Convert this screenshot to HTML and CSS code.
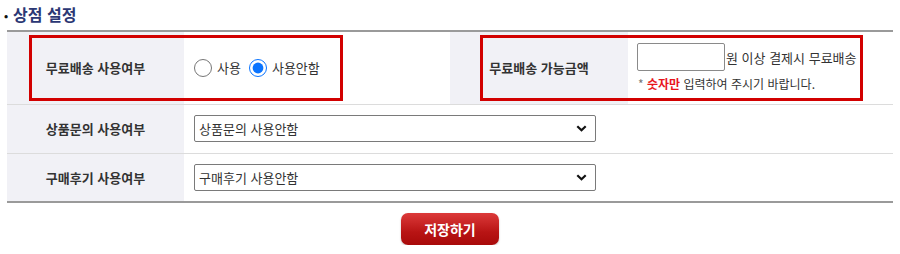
FILE: index.html
```html
<!DOCTYPE html>
<html lang="ko">
<head>
<meta charset="utf-8">
<title>상점 설정</title>
<link rel="stylesheet" href="styles.css">
</head>
<body>
<div class="page">
  <h2 class="title"><span class="bullet">•</span>상점 설정</h2>
  <div class="table-wrap">
    <table class="settings">
      <colgroup>
        <col class="c-label"><col class="c-value"><col class="c-label2"><col class="c-value2">
      </colgroup>
      <tr class="row-first">
        <th>무료배송 사용여부</th>
        <td>
          <div class="radios">
            <label class="radio"><input type="radio" name="free"><span>사용</span></label>
            <label class="radio"><input type="radio" name="free" checked><span>사용안함</span></label>
          </div>
        </td>
        <th>무료배송 가능금액</th>
        <td>
          <div class="amount"><input type="text" class="amount-input"><span>원 이상 결제시 무료배송</span></div>
          <p class="note"><span class="star">*</span> <b>숫자만</b> 입력하여 주시기 바랍니다.</p>
        </td>
      </tr>
      <tr>
        <th>상품문의 사용여부</th>
        <td colspan="3">
          <div class="select-wrap">
            <select><option>상품문의 사용안함</option><option>상품문의 사용함</option></select>
            <svg class="chev" width="11" height="7" viewBox="0 0 11 7"><path d="M1.3 1.3 L5.5 5.3 L9.7 1.3" fill="none" stroke="#111" stroke-width="2.2"/></svg>
          </div>
        </td>
      </tr>
      <tr class="row-last">
        <th>구매후기 사용여부</th>
        <td colspan="3">
          <div class="select-wrap">
            <select><option>구매후기 사용안함</option><option>구매후기 사용함</option></select>
            <svg class="chev" width="11" height="7" viewBox="0 0 11 7"><path d="M1.3 1.3 L5.5 5.3 L9.7 1.3" fill="none" stroke="#111" stroke-width="2.2"/></svg>
          </div>
        </td>
      </tr>
    </table>
    <div class="highlight hl-left"></div>
    <div class="highlight hl-right"></div>
  </div>
  <div class="actions"><button type="button" class="save">저장하기</button></div>
</div>
</body>
</html>
```

FILE: styles.css
```css
* { box-sizing: border-box; }
body {
  margin: 0;
  background: #fff;
  font-family: "Noto Sans CJK KR", "Noto Sans", sans-serif;
  color: #333;
}
.page { padding: 0 7px; }
.title {
  margin: 0;
  height: 30px;
  padding: 4px 0 0 0;
  font-size: 16px;
  line-height: 20px;
  font-weight: bold;
  color: #2b3774;
  margin-left: -4px;
}
.bullet {
  display: inline-block;
  color: #111;
  font-size: 11px;
  width: 9px;
  margin-left: 1px;
  vertical-align: 1px;
}
.table-wrap { position: relative; }
.settings {
  width: 100%;
  border-collapse: collapse;
  table-layout: fixed;
  border-top: 2px solid #9a9a9a;
  border-bottom: 2px solid #9a9a9a;
}
.c-label { width: 177px; }
.c-value { width: 266px; }
.c-label2 { width: 178px; }
.settings tr { border-bottom: 1px solid #dcdcdc; }
.settings tr.row-last { border-bottom: none; }
.settings th {
  background: #f1f1f6;
  font-size: 13px;
  font-weight: bold;
  color: #333;
  text-align: center;
  padding: 0;
  height: 49px;
}
.settings td {
  padding: 0 0 0 10px;
  font-size: 13px;
  vertical-align: middle;
  height: 49px;
}
.row-first th, .row-first td { height: 73px; }
.radios { display: flex; align-items: center; gap: 8px; }
.radio { display: flex; align-items: center; gap: 5px; color: #333; }
.radio input {
  margin: 0;
  width: 18px;
  height: 18px;
  accent-color: #0a74ff;
}
.amount { display: flex; align-items: center; }
.settings td .amount { margin-left: -1px; }
.amount-input {
  width: 88px;
  height: 28px;
  margin: 0 1px 0 0;
  border: 1px solid #8a8a8a;
  border-radius: 2px;
}
.note {
  margin: 5px 0 0 0;
  font-size: 12px;
  line-height: 16px;
  color: #333;
}
.note .star { color: #777; }
.note b { color: #e8141c; }
.select-wrap {
  position: relative;
  width: 402px;
}
.select-wrap select {
  appearance: none;
  -webkit-appearance: none;
  width: 402px;
  height: 27px;
  border: 1px solid #7a7a7a;
  border-radius: 2px;
  background: #fff;
  font-family: inherit;
  font-size: 13px;
  color: #333;
  padding: 0 24px 0 4px;
}
.chev {
  position: absolute;
  right: 9px;
  top: 10px;
  pointer-events: none;
}
.highlight {
  position: absolute;
  border: 3px solid #d20000;
  pointer-events: none;
}
.hl-left { left: 22px; top: 5px; width: 314px; height: 66px; }
.hl-right { left: 473px; top: 5px; width: 383px; height: 66px; }
.actions {
  display: flex;
  justify-content: center;
  padding-top: 10px;
}
.save {
  width: 98px;
  height: 32px;
  border: none;
  border-radius: 7px;
  background: linear-gradient(#dc3a3a, #b81414 60%, #a80a0a);
  box-shadow: 0 1px 2px rgba(0,0,0,0.25);
  color: #fff;
  font-family: inherit;
  font-size: 14px;
  font-weight: bold;
  padding: 0;
}
```
